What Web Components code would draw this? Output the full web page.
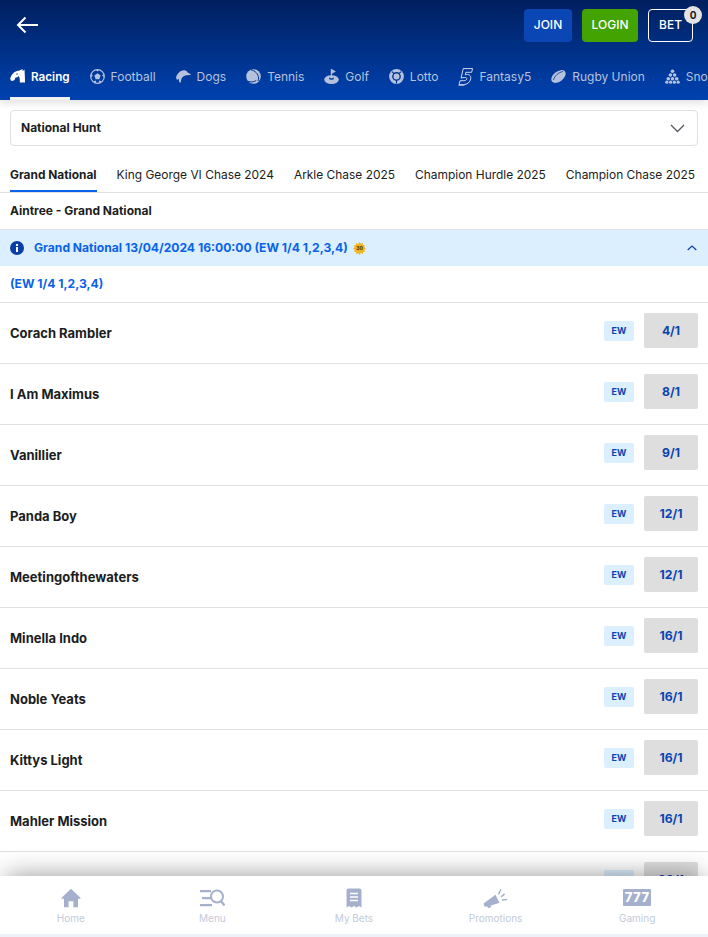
<!DOCTYPE html>
<html lang="en">
<head>
<meta charset="utf-8">
<title>Grand National</title>
<style>
  html, body { margin: 0; padding: 0; height: 937px; overflow: hidden; background: #fff; }
  body { font-family: Inter, "Liberation Sans", sans-serif; color: #1b1d21; }
  market-list { display: block; }
</style>
</head>
<body>
<app-header>
  <sport-tab label="Racing" icon="racing" active></sport-tab>
  <sport-tab label="Football" icon="football"></sport-tab>
  <sport-tab label="Dogs" icon="dogs"></sport-tab>
  <sport-tab label="Tennis" icon="tennis"></sport-tab>
  <sport-tab label="Golf" icon="golf"></sport-tab>
  <sport-tab label="Lotto" icon="lotto"></sport-tab>
  <sport-tab label="Fantasy5" icon="fantasy"></sport-tab>
  <sport-tab label="Rugby Union" icon="rugby"></sport-tab>
  <sport-tab label="Snooker" icon="snooker"></sport-tab>
</app-header>
<select-box>National Hunt</select-box>
<market-tabs>
  <market-tab active>Grand National</market-tab>
  <market-tab>King George VI Chase 2024</market-tab>
  <market-tab>Arkle Chase 2025</market-tab>
  <market-tab>Champion Hurdle 2025</market-tab>
  <market-tab>Champion Chase 2025</market-tab>
</market-tabs>
<event-title>Aintree - Grand National</event-title>
<info-bar>Grand National 13/04/2024 16:00:00 (EW 1/4 1,2,3,4)</info-bar>
<ew-terms>(EW 1/4 1,2,3,4)</ew-terms>
<market-list>
  <runner-row odds="4/1">Corach Rambler</runner-row>
  <runner-row odds="8/1">I Am Maximus</runner-row>
  <runner-row odds="9/1">Vanillier</runner-row>
  <runner-row odds="12/1">Panda Boy</runner-row>
  <runner-row odds="12/1">Meetingofthewaters</runner-row>
  <runner-row odds="16/1">Minella Indo</runner-row>
  <runner-row odds="16/1">Noble Yeats</runner-row>
  <runner-row odds="16/1">Kittys Light</runner-row>
  <runner-row odds="16/1">Mahler Mission</runner-row>
  <runner-row odds="20/1">Gerri Colombe</runner-row>
</market-list>
<bottom-nav>
  <nav-item label="Home" icon="home"></nav-item>
  <nav-item label="Menu" icon="menu"></nav-item>
  <nav-item label="My Bets" icon="bets"></nav-item>
  <nav-item label="Promotions" icon="promo"></nav-item>
  <nav-item label="Gaming" icon="gaming"></nav-item>
</bottom-nav>

<script>
const cut = '#00368f';
const sportIcons = {
  racing: `<path fill="currentColor" d="M.2 9.500C1.200 6 3.500 3 7 2L9.500 1.500 12.500 0l.1 2.200L14.500.5C14.800 5 15 9 15 13.500H9.800C10 11 9.800 8.800 8.800 7 7.800 8 6.500 8.500 5.500 8.500L4.500 11l-2 1-1.700-.5z"/><circle cx="7" cy="5" r=".7" fill="${cut}"/>`,
  football: '<circle cx="7.500" cy="7.500" r="6.800" fill="none" stroke="currentColor" stroke-width="1.200"/><path fill="currentColor" d="M7.500 4.300l3.100 2.300-1.200 3.600H5.600L4.400 6.600zM6 .9h3L7.500 2.600zM1 5.300l.3 3.300 1.600-2.500zM14 5.300l-.3 3.300-1.600-2.500zM3.200 12.200l2.900 1.900-.1-2.700zM11.800 12.200l-2.900 1.900.1-2.700z"/>',
  dogs: '<path fill="currentColor" d="M0 8.500C1 5 3.500 2 7 1.500c1.500-.3 2.500-.2 3.500.5L12 3.700l3 1.600-.8.8-3.700.2C8 6.500 6 8 5.200 10.500L4.600 14 3 12.500 2.800 9.700 1 11z"/>',
  tennis: `<circle cx="7.500" cy="7.500" r="7.300" fill="currentColor"/><path fill="none" stroke="${cut}" stroke-width="1" d="M5 .9c4 .6 7.300 4 7.600 8.100.1 1.300-.2 2.300-.7 3.200"/><path fill="none" stroke="${cut}" stroke-width="1" d="M2 12.400c3 1 6.500 .5 8.300-1"/>`,
  golf: `<ellipse cx="7.500" cy="10.600" rx="7.300" ry="4.400" fill="currentColor"/><path fill="currentColor" d="M6.800 0h1.100v9H6.800zM7.900 .2l4 2.300-4 2.200z"/><ellipse cx="7.500" cy="9.500" rx="2.400" ry="1.200" fill="${cut}"/><circle cx="7.500" cy="8.200" r="1.200" fill="currentColor"/>`,
  lotto: `<circle cx="7.500" cy="7.500" r="7.400" fill="currentColor"/><circle cx="7.500" cy="7.500" r="3.700" fill="none" stroke="${cut}" stroke-width="1.400"/><path stroke="${cut}" stroke-width="1.100" d="M3 2.700l2 2M12 2.700l-2 2M7.500 11.500v3"/>`,
  fantasy: '<path fill="none" stroke="#e4e9f4" stroke-width=".9" d="M5.200 .6h9.400l-1 3.700H7.900l-.6 2.500c3.500-1 6 .6 5.400 4-.6 3.600-3.500 5.800-7.500 5.800H1l1.100-3.900h3.800c1.500 0 2.600-.7 2.800-1.800.2-1.100-.7-1.700-2.400-1.400l-3.200.5z"/><path fill="none" stroke="#e4e9f4" stroke-width=".6" d="M.5 17.500h6"/>',
  rugby: `<ellipse cx="7.500" cy="7.500" rx="8.200" ry="5" transform="rotate(-38 7.500 7.500)" fill="currentColor"/><path fill="none" stroke="${cut}" stroke-width=".8" d="M2.500 11C3.500 7 7 3.500 12 2.500"/>`,
  snooker: '<g fill="currentColor"><circle cx="7.500" cy="2.200" r="1.800"/><circle cx="5.400" cy="6" r="1.800"/><circle cx="9.600" cy="6" r="1.800"/><circle cx="3.300" cy="9.800" r="1.800"/><circle cx="7.500" cy="9.800" r="1.800"/><circle cx="11.700" cy="9.800" r="1.800"/><circle cx="1.800" cy="13.200" r="1.600"/><circle cx="5.600" cy="13.200" r="1.600"/><circle cx="9.400" cy="13.200" r="1.600"/><circle cx="13.200" cy="13.200" r="1.600"/></g>'
};

const navIcons = {
  home: '<svg width="20" height="20" viewBox="0 0 20 20"><path fill="#a5b1cc" d="M10 .8l9.700 9.200-.6.800H17v8.400h-4.600v-6H7.600v6H3v-8.400H.9L.3 10z"/></svg>',
  menu: '<svg width="26" height="20" viewBox="0 0 26 20"><path fill="#a5b1cc" d="M1 2h11v2.200H1zM3 9h9v2.200H3zM1 16h12v2.200H1z"/><circle cx="18" cy="8.500" r="6" fill="none" stroke="#a5b1cc" stroke-width="2"/><path stroke="#a5b1cc" stroke-width="2.200" d="M22 13l3.500 4.500"/></svg>',
  bets: '<svg width="16" height="20" viewBox="0 0 16 20"><path fill="#a5b1cc" d="M2.500.5h11A2 2 0 0 1 15.500 2.500v17l-2.500-1.400-2.500 1.400L8 18.100l-2.500 1.400L3 18.100.5 19.500v-17a2 2 0 0 1 2-2z"/><path stroke="#fff" stroke-width="1.600" d="M4 5.500h8M4 9h8M4 12.500h8"/></svg>',
  promo: '<svg width="25" height="20" viewBox="0 0 25 20"><path fill="#a5b1cc" d="M.5 15.500L12.500 6.800l4 7.900-9 3 .6 1.800-3.100.5-1-1.700-2.200.6z"/><path stroke="#a5b1cc" stroke-width="1.500" fill="none" d="M15.500 6.500L18 1.300M18 8.800l3.600-3M19 12l5-.6"/></svg>',
  gaming: '<span class="g777">777</span>'
};

// helper so every component gets its own open shadow root
class Base extends HTMLElement {
  connectedCallback() {
    if (this.shadowRoot) return;
    this.attachShadow({ mode: 'open' });
    this.shadowRoot.innerHTML = this.markup();
  }
}

customElements.define('app-header', class extends Base {
  markup() {
    return `<style>
      :host { display: block; height: 100px; position: relative; z-index: 2;
        background: linear-gradient(180deg, #001f5e 0%, #0042b0 100%);
        box-shadow: 0 3px 8px rgba(0,0,0,.12); }
      .top { height: 52px; display: flex; align-items: flex-start; padding: 9px 15px 0 16px; box-sizing: border-box; }
      .back { margin-top: 7px; flex: none; }
      .actions { margin-left: auto; display: flex; gap: 10px; }
      .btn { height: 33px; box-sizing: border-box; display: flex; align-items: center; justify-content: center;
        border-radius: 4px; color: #fff; font: 500 12px/1 Inter, sans-serif; position: relative; padding-bottom: 1px; }
      .join { width: 48px; background: #0a46b4; }
      .login { width: 56px; background: #43a300; }
      .bet { width: 45px; border: 1px solid #fff; }
      .badge { position: absolute; top: -4px; right: -10px; width: 18px; height: 18px; border-radius: 50%;
        background: #e3e3e3; color: #1b1d21; font: 700 10px/18px Inter, sans-serif; text-align: center; }
      .tabs { display: flex; gap: 20px; padding-left: 10px; height: 48px; overflow: hidden; }
    </style>
    <div class="top">
      <svg class="back" width="23" height="18" viewBox="0 0 23 18" fill="none" stroke="#fff" stroke-width="2">
        <path d="M22 9H2M9.500 1.500L2 9l7.500 7.500"/>
      </svg>
      <div class="actions">
        <div class="btn join">JOIN</div>
        <div class="btn login">LOGIN</div>
        <div class="btn bet">BET<span class="badge">0</span></div>
      </div>
    </div>
    <div class="tabs"><slot></slot></div>`;
  }
});

customElements.define('sport-tab', class extends Base {
  markup() {
    const active = this.hasAttribute('active');
    const icon = this.getAttribute('icon');
    const box = icon === 'fantasy' ? '0 0 15 18' : '0 0 15 15';
    const h = icon === 'fantasy' ? 18 : 15;
    return `<style>
      :host { display: block; flex: none; height: 48px; box-sizing: border-box; color: ${active ? '#fff' : '#b5c2dd'};
        ${active ? 'box-shadow: inset 0 -3px 0 #f2f2f2;' : ''} }
      .in { display: flex; align-items: center; gap: 6px; height: 48px; box-sizing: border-box; padding-top: 1px; }
      svg { flex: none; display: block; }
      span { font: ${active ? 600 : 400} ${active ? 11.7 : 12}px/14px Inter, sans-serif; white-space: nowrap; }
    </style>
    <div class="in"><svg width="15" height="${h}" viewBox="${box}">${sportIcons[icon]}</svg><span>${this.getAttribute('label')}</span></div>`;
  }
});

customElements.define('select-box', class extends Base {
  markup() {
    return `<style>
      :host { display: block; margin: 10px 10px 0; height: 36px; box-sizing: border-box; border: 1px solid #e0e0e0;
        border-radius: 4px; font: 700 12px/1 Inter, sans-serif; color: #1b1d21; }
      .in { display: flex; align-items: center; justify-content: space-between; height: 100%; padding: 0 12px 0 10px; }
    </style>
    <div class="in"><slot></slot>
      <svg width="15" height="9" viewBox="0 0 15 9" fill="none" stroke="#55585e" stroke-width="1.300"><path d="M1 1l6.500 6.500L14 1"/></svg>
    </div>`;
  }
});

customElements.define('market-tabs', class extends Base {
  markup() {
    return `<style>
      :host { display: flex; gap: 20px; height: 47px; box-sizing: border-box; padding-left: 10px;
        border-bottom: 1px solid #e0e0e0; overflow: hidden; }
    </style><slot></slot>`;
  }
});

customElements.define('market-tab', class extends Base {
  markup() {
    const active = this.hasAttribute('active');
    return `<style>
      :host { display: block; flex: none; height: 46px; box-sizing: border-box; padding-top: 22px;
        font: ${active ? 700 : 400} ${active ? 11.9 : 11.95}px/14px Inter, sans-serif; color: #1b1d21; white-space: nowrap;
        ${active ? 'box-shadow: inset 0 -2px 0 #0a62ea;' : ''} }
    </style><slot></slot>`;
  }
});

customElements.define('event-title', class extends Base {
  markup() {
    return `<style>
      :host { display: block; height: 37px; box-sizing: border-box; padding: 11px 10px 0;
        font: 700 12px/14px Inter, sans-serif; color: #1b1d21; border-bottom: 1px solid #e0e0e0; }
    </style><slot></slot>`;
  }
});

customElements.define('info-bar', class extends Base {
  markup() {
    return `<style>
      :host { display: block; height: 36px; background: #dcefff; color: #0a62ea; }
      .in { display: flex; align-items: center; height: 36px; padding: 0 10px; box-sizing: border-box;
        font: 700 12.100px/1 Inter, sans-serif; }
      .i { width: 14px; height: 14px; flex: none; margin-right: 10px; }
      .sun { margin-left: 5px; flex: none; }
      .up { margin-left: auto; margin-right: 1px; flex: none; }
    </style>
    <div class="in">
      <svg class="i" viewBox="0 0 14 14"><circle cx="7" cy="7" r="7" fill="#0b3fa8"/><path fill="#fff" d="M6 6h2v5H6zM6 3h2v2H6z"/></svg>
      <slot></slot>
      <svg class="sun" width="13" height="13" viewBox="0 0 13 13">
        <path fill="#f0b429" d="M6.500 0l1.200 1.700 1.900-.9.300 2.100 2.100.3-.9 1.900L13 6.500l-1.700 1.200.9 1.900-2.100.3-.3 2.100-1.900-.9L6.500 13l-1.200-1.700-1.900.9-.3-2.100-2.100-.3.900-1.900L0 6.500l1.700-1.200-.9-1.900 2.100-.3.3-2.100 1.900.9z"/>
        <text x="6.500" y="8.300" font-family="Inter, sans-serif" font-size="5" font-weight="700" fill="#3a2a00" text-anchor="middle">30</text>
      </svg>
      <svg class="up" width="10" height="6" viewBox="0 0 10 6" fill="none" stroke="#0b3fa8" stroke-width="1.200"><path d="M.7 5L5 1l4.300 4"/></svg>
    </div>`;
  }
});

customElements.define('ew-terms', class extends Base {
  markup() {
    return `<style>
      :host { display: block; height: 37px; box-sizing: border-box; padding: 11px 10px 0; color: #0a62ea;
        font: 700 12.100px/14px Inter, sans-serif; border-bottom: 1px solid #e0e0e0; }
    </style><slot></slot>`;
  }
});

customElements.define('runner-row', class extends Base {
  markup() {
    return `<style>
      :host { display: flex; align-items: center; height: 61px; box-sizing: border-box; padding: 0 10px;
        border-bottom: 1px solid #e0e0e0; font: 700 13px/1 Inter, sans-serif; color: #1b1d21; }
      .name { flex: 1; }
      .ew { width: 30px; height: 20px; border-radius: 2px; background: #dcefff; color: #0a44b0; margin: 0 10px 4px 0;
        font: 700 9px/20px Inter, sans-serif; text-align: center; }
      .odds { width: 54px; height: 35px; border-radius: 2px; background: #dedede; color: #0a44b0; margin-bottom: 6px;
        font: 700 12.200px/35px Inter, sans-serif; text-align: center; }
    </style>
    <span class="name"><slot></slot></span><span class="ew">EW</span><span class="odds">${this.getAttribute('odds')}</span>`;
  }
});

customElements.define('bottom-nav', class extends Base {
  markup() {
    return `<style>
      :host { display: block; position: fixed; left: 0; right: 0; top: 876px; height: 61px; z-index: 5; background: #eef2f8;
        box-shadow: 0 -6px 26px -6px rgba(0,0,0,.42); }
      .in { display: grid; grid-template-columns: repeat(5, 1fr); height: 58px; background: #fff; }
    </style><div class="in"><slot></slot></div>`;
  }
});

customElements.define('nav-item', class extends Base {
  markup() {
    return `<style>
      :host { display: block; }
      .in { display: flex; flex-direction: column; align-items: center; padding-top: 11px; }
      .ic { height: 21px; display: flex; align-items: center; justify-content: center; }
      .lb { margin-top: 4px; font: 400 10px/12px Inter, sans-serif; color: #c3cad9; }
      .g777 { display: block; width: 28px; height: 17px; background: #a5b1cc; border-radius: 1px; color: #fff;
        font: 800 13px/17px Inter, sans-serif; text-align: center; letter-spacing: .5px; }
    </style>
    <div class="in"><div class="ic">${navIcons[this.getAttribute('icon')]}</div><div class="lb">${this.getAttribute('label')}</div></div>`;
  }
});
</script>
</body>
</html>
